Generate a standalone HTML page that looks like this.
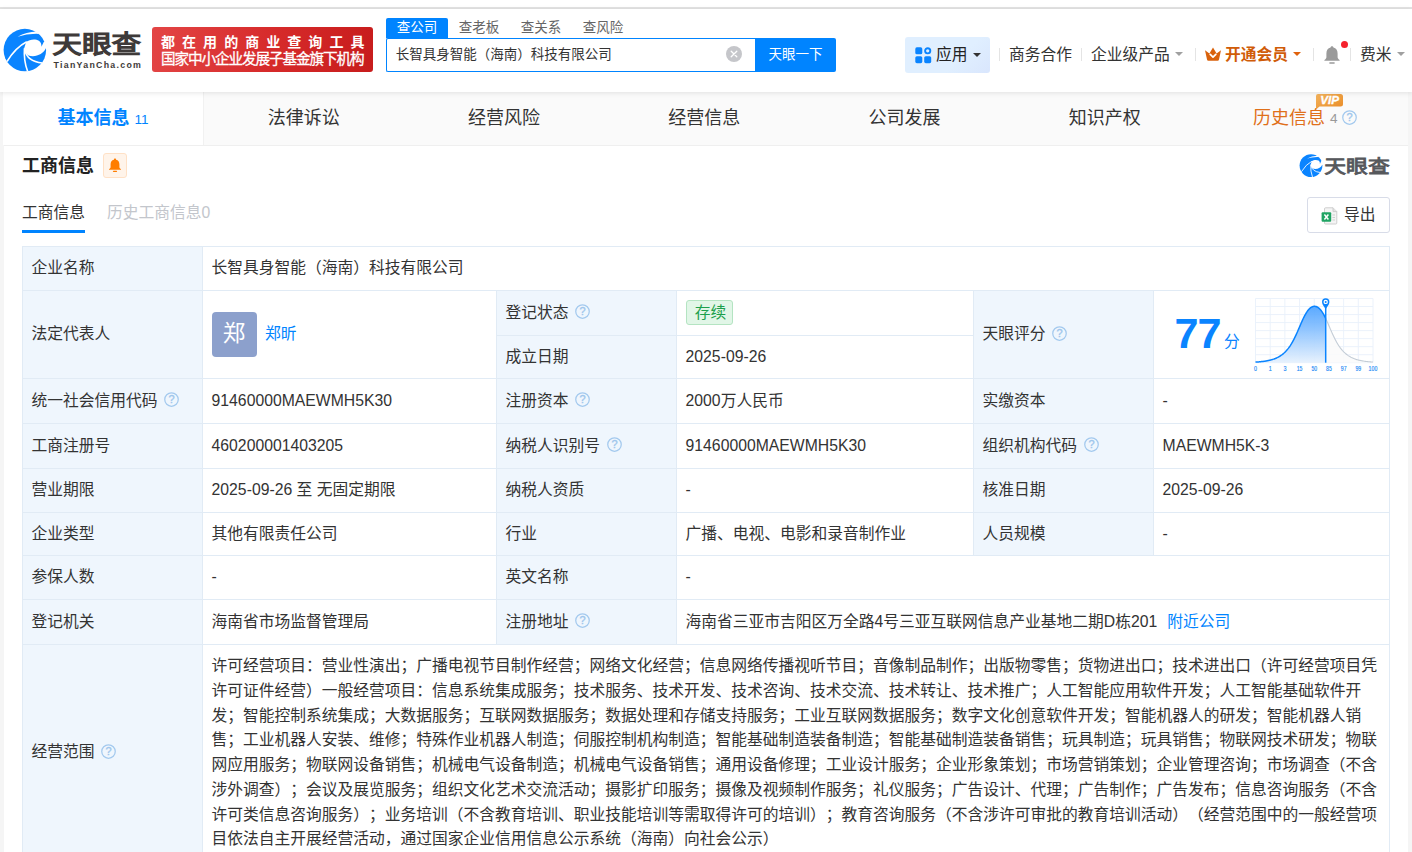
<!DOCTYPE html>
<html lang="zh-CN">
<head>
<meta charset="utf-8">
<title>长智具身智能（海南）科技有限公司 - 天眼查</title>
<style>
*{box-sizing:border-box;}
html,body{margin:0;padding:0;}
body{
  width:1412px;height:852px;overflow:hidden;position:relative;background:#f5f5f5;
  font-family:"Liberation Sans","Noto Sans CJK SC",sans-serif;
  font-size:15.75px;color:#333;
  text-spacing-trim:space-all;
  -webkit-font-smoothing:antialiased;
}
.abs{position:absolute;}
/* ---------- top / header ---------- */
#topwhite{left:0;top:0;width:1412px;height:92px;background:#fff;}
#topline{left:0;top:7px;width:1412px;height:2px;background:#e3e3e3;}
#header{left:0;top:9px;width:1412px;height:83px;background:#fff;box-shadow:0 1px 5px rgba(0,0,0,.10);z-index:5;}
#logo{left:3px;top:28px;width:140px;height:44px;z-index:6;}
#banner{left:152px;top:27px;width:221px;height:45px;border-radius:3px;z-index:6;
  background:linear-gradient(100deg,#e34545 0%,#d62a2a 55%,#c71c1c 100%);color:#fff;white-space:nowrap;}
#banner .l1{position:absolute;left:9px;top:3.5px;font-size:14px;font-weight:bold;letter-spacing:7.05px;line-height:22px;}
#banner .l2{position:absolute;left:9px;top:21px;font-size:14.6px;letter-spacing:-1.1px;line-height:22px;-webkit-text-stroke:.3px #fff;}
.stab{top:18px;width:62px;height:20px;line-height:19px;font-size:13.5px;text-align:center;color:#666;z-index:6;letter-spacing:0;}
.stab.on{background:#0084ff;color:#fff;border-radius:2px 2px 0 0;}
#sinput{left:386px;top:38px;width:371px;height:34px;border:1px solid #0084ff;border-right:none;border-radius:2px 0 0 2px;background:#fff;z-index:6;
  font-size:13.5px;line-height:32px;padding-left:8.8px;color:#333;white-space:nowrap;}
#sclear{left:726px;top:46px;width:16px;height:16px;border-radius:50%;background:#c5c6ca;z-index:7;}
#sbtn{left:755px;top:38px;width:81px;height:34px;background:#0084ff;color:#fff;font-size:13.5px;line-height:33px;text-align:center;border-radius:0 2px 2px 0;z-index:6;}
#app{left:905px;top:37px;width:85px;height:36px;border-radius:3px;background:linear-gradient(135deg,#e0efff 0%,#e0efff 62%,#d9e6fd 100%);z-index:6;}
.hsep{top:48px;width:1px;height:13px;background:#e4e4e4;z-index:6;}
.htxt{top:43px;height:24px;line-height:24px;font-size:15.75px;color:#333;white-space:nowrap;z-index:6;}
.caret{width:0;height:0;border-left:4px solid transparent;border-right:4px solid transparent;border-top:4.5px solid #999;z-index:6;}
/* ---------- nav ---------- */
#nav{left:4px;top:92px;width:1404px;height:54px;background:#fafafa;border-bottom:1px solid #efefef;z-index:1;}
.ntab{top:92px;height:53px;line-height:52px;text-align:center;font-size:18px;color:#333;white-space:nowrap;z-index:2;}
/* ---------- card ---------- */
#card{left:4px;top:146px;width:1404px;height:706px;background:#fff;}
#title{left:22px;top:152.5px;font-size:18px;font-weight:bold;line-height:26px;color:#222;white-space:nowrap;}
#bellbox{left:103px;top:153px;width:24px;height:25px;border:1px solid #ffe1c6;background:#fff4ea;border-radius:3px;}
.subtab{top:200px;line-height:26px;font-size:15.75px;white-space:nowrap;}
#uline{left:22px;top:230px;width:63px;height:3px;background:#0084ff;}
#export{left:1307px;top:197px;width:83px;height:36px;border:1px solid #d8dce8;border-radius:3px;background:#fff;}
#export span{position:absolute;left:36px;top:5px;line-height:24px;font-size:15.75px;color:#333;}
/* ---------- table ---------- */
#tbl{left:22px;top:246px;width:1368px;border-collapse:collapse;table-layout:fixed;}
#tbl td{border:1px solid #e1ebf5;padding:0 9px 0 8.6px;vertical-align:middle;font-size:15.75px;line-height:24.75px;color:#333;white-space:nowrap;overflow:hidden;}
#tbl td.k{background:#eff6fd;}
.q{display:inline-block;width:15px;height:15px;vertical-align:-1.5px;margin-left:6.8px;}
.lnk{color:#0084ff;}
.ava{display:inline-block;width:45px;height:45px;border-radius:4px;background:#8ca0cc;color:#fff;font-size:22.5px;line-height:44px;text-align:center;vertical-align:middle;}
.tag{display:inline-block;position:relative;top:-1px;height:25px;line-height:23px;padding:0 6px 0 8.2px;border:1px solid #b4e4c2;background:#e1f6e7;color:#1c9f4b;border-radius:3px;font-size:15.75px;vertical-align:middle;}
</style>
</head>
<body>
<div class="abs" id="topwhite"></div>
<div class="abs" id="header"></div>
<div class="abs" id="topline"></div>


<!-- logo -->
<svg class="abs" id="logo" viewBox="0 0 140 44" width="140" height="44">
  <g transform="translate(0.6,0.8) scale(0.425)">
    <circle cx="50" cy="50" r="50" fill="#0a84ff"/>
    <path d="M33 18.5 Q53 7.5 78.5 6.5 L83 12 Q56 11 33 18.5 Z" fill="#fff"/>
    <path d="M53 31 C61 24.5 75 23 83 28 C88 31.5 89.5 37 89 42.5 L94.5 31 L103 28 L103 47 L99.5 46 C93 60 75 68.5 57 62.5 L50 53 L48 47 Z" fill="#fff"/>
    <path d="M54.5 30.5 Q28 44 8 77" fill="none" stroke="#fff" stroke-width="3.8"/>
    <path d="M49 46 Q47 75 56.5 100" fill="none" stroke="#fff" stroke-width="3.8"/>
    <path d="M50 50 Q55 76 91 80.5" fill="none" stroke="#fff" stroke-width="3.8"/>
  </g>
  <text x="49.3" y="25.3" font-family="'Liberation Sans','Noto Sans CJK SC',sans-serif" font-weight="400" font-size="24.6" fill="#3e3a39" stroke="#3e3a39" stroke-width="1.25" stroke-linejoin="miter" textLength="89" lengthAdjust="spacingAndGlyphs">天眼查</text>
  <text x="50.6" y="39.8" font-family="'Liberation Sans',sans-serif" font-weight="bold" font-size="8.8" fill="#3e3a39" textLength="87.3" lengthAdjust="spacing">TianYanCha.com</text>
</svg>
<div class="abs" id="banner"><div class="l1">都在用的商业查询工具</div><div class="l2">国家中小企业发展子基金旗下机构</div></div>

<!-- search -->
<div class="abs stab on" style="left:386px;">查公司</div>
<div class="abs stab" style="left:448px;">查老板</div>
<div class="abs stab" style="left:510px;">查关系</div>
<div class="abs stab" style="left:572px;">查风险</div>
<div class="abs" id="sinput">长智具身智能（海南）科技有限公司</div>
<div class="abs" id="sclear"><svg viewBox="0 0 16 16" width="16" height="16" style="display:block"><path d="M5.2 5.2 L10.8 10.8 M10.8 5.2 L5.2 10.8" stroke="#fff" stroke-width="1.3" stroke-linecap="round" fill="none"/></svg></div>
<div class="abs" id="sbtn">天眼一下</div>

<!-- right menu -->
<div class="abs" id="app">
  <svg class="abs" style="left:10px;top:10px" width="17" height="17" viewBox="0 0 17 17">
    <rect x="0.3" y="0.3" width="7" height="7" rx="1.6" fill="#0a84ff"/>
    <rect x="0.3" y="9.2" width="7" height="7" rx="1.6" fill="#0a84ff"/>
    <rect x="9.2" y="9.2" width="7" height="7" rx="1.6" fill="#0a84ff"/>
    <circle cx="12.7" cy="3.8" r="2.6" fill="none" stroke="#0a84ff" stroke-width="1.9"/>
  </svg>
  <span class="abs" style="left:31px;top:6px;line-height:24px;font-size:15.75px;color:#222;white-space:nowrap;">应用</span>
  <span class="abs caret" style="left:68px;top:16px;border-top-color:#333;"></span>
</div>
<div class="abs hsep" style="left:999px;"></div>
<div class="abs htxt" style="left:1009px;">商务合作</div>
<div class="abs hsep" style="left:1081px;"></div>
<div class="abs htxt" style="left:1091px;">企业级产品</div>
<div class="abs caret" style="left:1175px;top:52px;border-top-color:#a0a0a0;"></div>
<div class="abs hsep" style="left:1195px;"></div>
<svg class="abs" style="left:1204px;top:46px;z-index:6" width="18" height="16" viewBox="0 0 18 16">
  <path d="M1 4.2 L5.4 7.6 L9 1.4 L12.6 7.6 L17 4.2 L15 13.6 Q14.8 14.8 13.6 14.8 L4.4 14.8 Q3.2 14.8 3 13.6 Z" fill="#d9620c"/>
  <path d="M6.2 8.4 L9 11.2 L11.8 8.4" fill="none" stroke="#fff" stroke-width="1.7" stroke-linecap="round" stroke-linejoin="round"/>
</svg>
<div class="abs htxt" style="left:1225px;color:#d05c08;font-weight:bold;">开通会员</div>
<div class="abs caret" style="left:1293px;top:52px;border-top-color:#e0620d;"></div>
<div class="abs hsep" style="left:1313px;"></div>
<svg class="abs" style="left:1323px;top:45px;z-index:6" width="18" height="20" viewBox="0 0 18 20">
  <path d="M9 1.2 C9.9 1.2 10.4 1.8 10.4 2.6 C13.2 3.3 14.6 5.6 14.6 8.4 L14.6 12.2 C14.6 13.4 15.6 14.2 16.6 15 L16.6 15.8 L1.4 15.8 L1.4 15 C2.4 14.2 3.4 13.4 3.4 12.2 L3.4 8.4 C3.4 5.6 4.8 3.3 7.6 2.6 C7.6 1.8 8.1 1.2 9 1.2 Z" fill="#9a9a9a"/>
  <rect x="6.2" y="17.3" width="5.6" height="1.5" rx=".7" fill="#9a9a9a"/>
</svg>
<div class="abs" style="left:1341px;top:41px;width:7px;height:7px;border-radius:50%;background:#f5222d;z-index:7;"></div>
<div class="abs hsep" style="left:1350px;"></div>
<div class="abs htxt" style="left:1360px;">费米</div>
<div class="abs caret" style="left:1397px;top:52px;border-top-color:#a0a0a0;"></div>


<div class="abs" id="nav"></div>
<div class="abs ntab" style="left:3.40px;width:200.25px;background:#fff;border-right:1px solid #f1f1f1;color:#0084ff;font-weight:bold;">基本信息<span style="font-weight:normal;font-size:13.5px;margin-left:5px;">11</span></div>
<div class="abs ntab" style="left:203.65px;width:200.25px;">法律诉讼</div>
<div class="abs ntab" style="left:403.90px;width:200.25px;">经营风险</div>
<div class="abs ntab" style="left:604.15px;width:200.25px;">经营信息</div>
<div class="abs ntab" style="left:804.40px;width:200.25px;">公司发展</div>
<div class="abs ntab" style="left:1004.65px;width:200.25px;">知识产权</div>
<div class="abs ntab" style="left:1204.90px;width:200.25px;color:#e0701a;text-align:left;padding-left:48.2px;">历史信息<span style="font-size:13.5px;color:#999;margin-left:5px;position:relative;top:-1.5px;">4</span></div>
<svg class="abs q" style="left:1342px;top:110px;width:15px;height:15px;margin:0;z-index:3" viewBox="0 0 15 15"><circle cx="7.5" cy="7.5" r="6.75" fill="none" stroke="#a3c9ee" stroke-width="1.25"/><text x="7.5" y="11.3" font-size="11" text-anchor="middle" fill="#9fc6ec" stroke="#9fc6ec" stroke-width=".35" font-family="'Liberation Sans',sans-serif">?</text></svg>
<svg class="abs" style="left:1315px;top:94px;z-index:3" width="29" height="16" viewBox="0 0 29 16">
  <defs><linearGradient id="vg" x1="0" y1="0" x2="1" y2="1"><stop offset="0" stop-color="#f3b35c"/><stop offset="1" stop-color="#e98a25"/></linearGradient></defs>
  <path d="M3 0 H25.5 Q28 0 28 2.5 V10 Q28 12.5 25.5 12.5 H4.5 L1 15.5 V2 Q1 0 3 0 Z" fill="url(#vg)"/>
  <text x="14.6" y="10.4" font-size="11.6" font-weight="bold" font-style="italic" text-anchor="middle" fill="#fff" stroke="#fff" stroke-width=".35" font-family="'Liberation Sans',sans-serif">VIP</text>
</svg>


<div class="abs" id="card"></div>
<div class="abs" id="title">工商信息</div>
<div class="abs" id="bellbox"><svg class="abs" style="left:4px;top:4px" width="14" height="15" viewBox="0 0 14 15"><path d="M7 0.6 C7.7 0.6 8.1 1.1 8.1 1.7 C10.3 2.2 11.4 4 11.4 6.2 L11.4 9 C11.4 10 12.2 10.6 13 11.2 L13 11.8 L1 11.8 L1 11.2 C1.8 10.6 2.6 10 2.6 9 L2.6 6.2 C2.6 4 3.7 2.2 5.9 1.7 C5.9 1.1 6.3 0.6 7 0.6 Z" fill="#ff7d00"/><rect x="4.9" y="12.7" width="4.2" height="1.2" rx=".6" fill="#ff7d00"/></svg></div>
<div class="abs subtab" style="left:22px;color:#333;">工商信息</div>
<div class="abs subtab" style="left:107px;color:#c3c6cc;">历史工商信息0</div>
<div class="abs" id="uline"></div>

<!-- watermark logo -->
<svg class="abs" style="left:1298px;top:152px" width="94" height="28" viewBox="0 0 94 28">
  <g transform="translate(1.6,2.2) scale(0.228)">
    <circle cx="50" cy="50" r="50" fill="#0a84ff"/>
    <path d="M33 18.5 Q53 7.5 78.5 6.5 L83 12 Q56 11 33 18.5 Z" fill="#fff"/>
    <path d="M53 31 C61 24.5 75 23 83 28 C88 31.5 89.5 37 89 42.5 L94.5 31 L103 28 L103 47 L99.5 46 C93 60 75 68.5 57 62.5 L50 53 L48 47 Z" fill="#fff"/>
    <path d="M54.5 30.5 Q28 44 8 77" fill="none" stroke="#fff" stroke-width="3.8"/>
    <path d="M49 46 Q47 75 56.5 100" fill="none" stroke="#fff" stroke-width="3.8"/>
    <path d="M50 50 Q55 76 91 80.5" fill="none" stroke="#fff" stroke-width="3.8"/>
  </g>
  <text x="26.3" y="20.9" font-family="'Liberation Sans','Noto Sans CJK SC',sans-serif" font-weight="400" font-size="18.2" fill="#56585c" stroke="#56585c" stroke-width=".85" textLength="65.5" lengthAdjust="spacingAndGlyphs">天眼查</text>
</svg>

<div class="abs" id="export">
  <svg class="abs" style="left:13px;top:9px" width="17" height="18" viewBox="0 0 17 18">
    <path d="M4.5 0.8 H12 L15.8 4.6 V16 Q15.8 17 14.8 17 H4.5 Q3.5 17 3.5 16 V1.8 Q3.5 0.8 4.5 0.8 Z" fill="#f4f4f4" stroke="#c9c9c9" stroke-width=".9"/>
    <path d="M12 0.8 V4.6 H15.8" fill="#e2e2e2" stroke="#c9c9c9" stroke-width=".9"/>
    <path d="M11.5 8 H14 M11.5 10.5 H14 M11.5 13 H14" stroke="#cfcfcf" stroke-width="1"/>
    <rect x="0.6" y="5.2" width="9.6" height="9.6" rx="1" fill="#1fa463"/>
    <path d="M3.4 7.6 L7.4 12.4 M7.4 7.6 L3.4 12.4" stroke="#fff" stroke-width="1.5" fill="none"/>
  </svg>
  <span>导出</span>
</div>

<table class="abs" id="tbl" cellspacing="0" cellpadding="0">
<colgroup><col style="width:180px"><col style="width:294px"><col style="width:180px"><col style="width:297px"><col style="width:180px"><col style="width:236px"></colgroup>
<tr style="height:44px"><td class="k">企业名称</td><td colspan="5">长智具身智能（海南）科技有限公司</td></tr>
<tr style="height:45px"><td class="k" rowspan="2">法定代表人</td><td rowspan="2" style="position:relative;"><span class="ava">郑</span><span class="lnk" style="position:absolute;left:62px;top:31px;">郑昕</span></td><td class="k">登记状态<svg class="q" viewBox="0 0 15 15"><circle cx="7.5" cy="7.5" r="6.75" fill="none" stroke="#a3c9ee" stroke-width="1.25"/><text x="7.5" y="11.3" font-size="11" text-anchor="middle" fill="#9fc6ec" stroke="#9fc6ec" stroke-width=".35" font-family="'Liberation Sans',sans-serif">?</text></svg></td><td><span class="tag">存续</span></td><td class="k" rowspan="2">天眼评分<svg class="q" viewBox="0 0 15 15"><circle cx="7.5" cy="7.5" r="6.75" fill="none" stroke="#a3c9ee" stroke-width="1.25"/><text x="7.5" y="11.3" font-size="11" text-anchor="middle" fill="#9fc6ec" stroke="#9fc6ec" stroke-width=".35" font-family="'Liberation Sans',sans-serif">?</text></svg></td><td rowspan="2" style="position:relative;padding:0;"><span class="abs" style="left:20.5px;top:17.5px;font-size:43.2px;line-height:48px;font-weight:bold;color:#0a84ff;letter-spacing:-1.1px;">77</span><span class="abs" style="left:70px;top:39px;font-size:15.75px;line-height:24px;color:#0a84ff;">分</span>
<svg class="abs" style="left:96px;top:1px;" width="130" height="85" viewBox="0 0 1300 850">
  <defs><linearGradient id="cg" x1="0" y1="0" x2="0" y2="1"><stop offset="0" stop-color="#4ea3ff"/><stop offset=".35" stop-color="#7fbcff"/><stop offset="1" stop-color="#e6f1fd"/></linearGradient></defs>
  <path d="M55.0 65 V707 M201.9 65 V707 M348.8 65 V707 M495.6 65 V707 M642.5 65 V707 M789.4 65 V707 M936.2 65 V707 M1083.1 65 V707 M1230.0 65 V707 M55 65.0 H1230 M55 145.2 H1230 M55 225.5 H1230 M55 305.8 H1230 M55 386.0 H1230 M55 466.2 H1230 M55 546.5 H1230 M55 626.8 H1230 M55 707.0 H1230 " fill="none" stroke="#e9f1fb" stroke-width="9"/>
  <path d="M757 264.6 L763 277.4 L769 290.6 L775 304.1 L781 317.8 L787 331.7 L793 345.8 L799 359.8 L805 373.8 L811 387.6 L817 401.3 L823 414.8 L829 428.0 L835 440.9 L841 453.4 L847 465.5 L853 477.2 L859 488.5 L865 499.4 L871 509.9 L877 519.9 L883 529.5 L889 538.7 L895 547.4 L901 555.8 L907 563.7 L913 571.3 L919 578.5 L925 585.4 L931 591.9 L937 598.1 L943 603.9 L949 609.5 L955 614.8 L961 619.8 L967 624.6 L973 629.1 L979 633.4 L985 637.5 L991 641.3 L997 645.0 L1003 648.4 L1009 651.7 L1015 654.8 L1021 657.7 L1027 660.5 L1033 663.1 L1039 665.6 L1045 667.9 L1051 670.1 L1057 672.2 L1063 674.2 L1069 676.1 L1075 677.8 L1081 679.5 L1087 681.1 L1093 682.5 L1099 683.9 L1105 685.3 L1111 686.5 L1117 687.7 L1123 688.8 L1129 689.9 L1135 690.8 L1141 691.8 L1147 692.7 L1153 693.5 L1159 694.3 L1165 695.0 L1171 695.7 L1177 696.4 L1183 697.0 L1189 697.6 L1195 698.1 L1201 698.6 L1207 699.1 L1213 699.6 L1219 700.0 L1225 700.4 L1230 700.7 L1230 707 L757 707 Z" fill="#fafafa" opacity=".85"/>
  <path d="M55 701.0 L61 700.7 L67 700.3 L73 699.9 L79 699.4 L85 698.9 L91 698.5 L97 697.9 L103 697.4 L109 696.8 L115 696.1 L121 695.5 L127 694.8 L133 694.0 L139 693.2 L145 692.4 L151 691.5 L157 690.5 L163 689.5 L169 688.4 L175 687.3 L181 686.1 L187 684.8 L193 683.5 L199 682.1 L205 680.5 L211 678.9 L217 677.2 L223 675.4 L229 673.5 L235 671.5 L241 669.4 L247 667.1 L253 664.8 L259 662.2 L265 659.6 L271 656.7 L277 653.8 L283 650.6 L289 647.3 L295 643.8 L301 640.1 L307 636.1 L313 632.0 L319 627.7 L325 623.1 L331 618.2 L337 613.1 L343 607.7 L349 602.0 L355 596.0 L361 589.7 L367 583.1 L373 576.1 L379 568.8 L385 561.1 L391 553.0 L397 544.5 L403 535.7 L409 526.3 L415 516.6 L421 506.4 L427 495.8 L433 484.8 L439 473.4 L445 461.5 L451 449.2 L457 436.6 L463 423.6 L469 410.3 L475 396.8 L481 383.0 L487 369.1 L493 355.1 L499 341.1 L505 327.1 L511 313.2 L517 299.6 L523 286.2 L529 273.1 L535 260.4 L541 248.3 L547 236.6 L553 225.6 L559 215.1 L565 205.4 L571 196.3 L577 187.9 L583 180.2 L589 173.3 L595 167.1 L601 161.6 L607 156.8 L613 152.8 L619 149.4 L625 146.8 L631 144.9 L637 143.6 L643 143.0 L649 143.2 L655 143.9 L661 145.4 L667 147.6 L673 150.5 L679 154.0 L685 158.3 L691 163.3 L697 169.0 L703 175.5 L709 182.7 L715 190.6 L721 199.2 L727 208.5 L733 218.5 L739 229.2 L745 240.4 L751 252.3 L757 264.6 L757 707 L55 707 Z" fill="url(#cg)" opacity=".93"/>
  <path d="M757 264.6 L763 277.4 L769 290.6 L775 304.1 L781 317.8 L787 331.7 L793 345.8 L799 359.8 L805 373.8 L811 387.6 L817 401.3 L823 414.8 L829 428.0 L835 440.9 L841 453.4 L847 465.5 L853 477.2 L859 488.5 L865 499.4 L871 509.9 L877 519.9 L883 529.5 L889 538.7 L895 547.4 L901 555.8 L907 563.7 L913 571.3 L919 578.5 L925 585.4 L931 591.9 L937 598.1 L943 603.9 L949 609.5 L955 614.8 L961 619.8 L967 624.6 L973 629.1 L979 633.4 L985 637.5 L991 641.3 L997 645.0 L1003 648.4 L1009 651.7 L1015 654.8 L1021 657.7 L1027 660.5 L1033 663.1 L1039 665.6 L1045 667.9 L1051 670.1 L1057 672.2 L1063 674.2 L1069 676.1 L1075 677.8 L1081 679.5 L1087 681.1 L1093 682.5 L1099 683.9 L1105 685.3 L1111 686.5 L1117 687.7 L1123 688.8 L1129 689.9 L1135 690.8 L1141 691.8 L1147 692.7 L1153 693.5 L1159 694.3 L1165 695.0 L1171 695.7 L1177 696.4 L1183 697.0 L1189 697.6 L1195 698.1 L1201 698.6 L1207 699.1 L1213 699.6 L1219 700.0 L1225 700.4 L1230 700.7" fill="none" stroke="#c3ccd6" stroke-width="11"/>
  <path d="M55 701.0 L61 700.7 L67 700.3 L73 699.9 L79 699.4 L85 698.9 L91 698.5 L97 697.9 L103 697.4 L109 696.8 L115 696.1 L121 695.5 L127 694.8 L133 694.0 L139 693.2 L145 692.4 L151 691.5 L157 690.5 L163 689.5 L169 688.4 L175 687.3 L181 686.1 L187 684.8 L193 683.5 L199 682.1 L205 680.5 L211 678.9 L217 677.2 L223 675.4 L229 673.5 L235 671.5 L241 669.4 L247 667.1 L253 664.8 L259 662.2 L265 659.6 L271 656.7 L277 653.8 L283 650.6 L289 647.3 L295 643.8 L301 640.1 L307 636.1 L313 632.0 L319 627.7 L325 623.1 L331 618.2 L337 613.1 L343 607.7 L349 602.0 L355 596.0 L361 589.7 L367 583.1 L373 576.1 L379 568.8 L385 561.1 L391 553.0 L397 544.5 L403 535.7 L409 526.3 L415 516.6 L421 506.4 L427 495.8 L433 484.8 L439 473.4 L445 461.5 L451 449.2 L457 436.6 L463 423.6 L469 410.3 L475 396.8 L481 383.0 L487 369.1 L493 355.1 L499 341.1 L505 327.1 L511 313.2 L517 299.6 L523 286.2 L529 273.1 L535 260.4 L541 248.3 L547 236.6 L553 225.6 L559 215.1 L565 205.4 L571 196.3 L577 187.9 L583 180.2 L589 173.3 L595 167.1 L601 161.6 L607 156.8 L613 152.8 L619 149.4 L625 146.8 L631 144.9 L637 143.6 L643 143.0 L649 143.2 L655 143.9 L661 145.4 L667 147.6 L673 150.5 L679 154.0 L685 158.3 L691 163.3 L697 169.0 L703 175.5 L709 182.7 L715 190.6 L721 199.2 L727 208.5 L733 218.5 L739 229.2 L745 240.4 L751 252.3 L757 264.6" fill="none" stroke="#0a84ff" stroke-width="15" stroke-linejoin="round"/>
  <path d="M757 150 V707" stroke="#0a84ff" stroke-width="15"/>
  <path d="M757 172 C745 150 720 128 720 100 A37 37 0 1 1 794 100 C794 128 769 150 757 172 Z" fill="#0a84ff"/>
  <circle cx="757" cy="99" r="22" fill="#fff"/>
  <circle cx="757" cy="99" r="10" fill="#0a84ff"/>
  <g font-family="'Liberation Sans',sans-serif" font-size="64" fill="#2189f6" stroke="#2189f6" stroke-width="1.5"><text x="40" y="791" textLength="30" lengthAdjust="spacingAndGlyphs">0</text><text x="187" y="791" textLength="30" lengthAdjust="spacingAndGlyphs">1</text><text x="334" y="791" textLength="30" lengthAdjust="spacingAndGlyphs">3</text><text x="467" y="791" textLength="57" lengthAdjust="spacingAndGlyphs">15</text><text x="614" y="791" textLength="57" lengthAdjust="spacingAndGlyphs">50</text><text x="761" y="791" textLength="57" lengthAdjust="spacingAndGlyphs">85</text><text x="908" y="791" textLength="57" lengthAdjust="spacingAndGlyphs">97</text><text x="1055" y="791" textLength="57" lengthAdjust="spacingAndGlyphs">99</text><text x="1186" y="791" textLength="87" lengthAdjust="spacingAndGlyphs">100</text></g>
</svg></td></tr>
<tr style="height:43px"><td class="k">成立日期</td><td>2025-09-26</td></tr>
<tr style="height:45px"><td class="k">统一社会信用代码<svg class="q" viewBox="0 0 15 15"><circle cx="7.5" cy="7.5" r="6.75" fill="none" stroke="#a3c9ee" stroke-width="1.25"/><text x="7.5" y="11.3" font-size="11" text-anchor="middle" fill="#9fc6ec" stroke="#9fc6ec" stroke-width=".35" font-family="'Liberation Sans',sans-serif">?</text></svg></td><td>91460000MAEWMH5K30</td><td class="k">注册资本<svg class="q" viewBox="0 0 15 15"><circle cx="7.5" cy="7.5" r="6.75" fill="none" stroke="#a3c9ee" stroke-width="1.25"/><text x="7.5" y="11.3" font-size="11" text-anchor="middle" fill="#9fc6ec" stroke="#9fc6ec" stroke-width=".35" font-family="'Liberation Sans',sans-serif">?</text></svg></td><td>2000万人民币</td><td class="k">实缴资本</td><td>-</td></tr>
<tr style="height:45px"><td class="k">工商注册号</td><td>460200001403205</td><td class="k">纳税人识别号<svg class="q" viewBox="0 0 15 15"><circle cx="7.5" cy="7.5" r="6.75" fill="none" stroke="#a3c9ee" stroke-width="1.25"/><text x="7.5" y="11.3" font-size="11" text-anchor="middle" fill="#9fc6ec" stroke="#9fc6ec" stroke-width=".35" font-family="'Liberation Sans',sans-serif">?</text></svg></td><td>91460000MAEWMH5K30</td><td class="k">组织机构代码<svg class="q" viewBox="0 0 15 15"><circle cx="7.5" cy="7.5" r="6.75" fill="none" stroke="#a3c9ee" stroke-width="1.25"/><text x="7.5" y="11.3" font-size="11" text-anchor="middle" fill="#9fc6ec" stroke="#9fc6ec" stroke-width=".35" font-family="'Liberation Sans',sans-serif">?</text></svg></td><td>MAEWMH5K-3</td></tr>
<tr style="height:44px"><td class="k">营业期限</td><td>2025-09-26 至 无固定期限</td><td class="k">纳税人资质</td><td>-</td><td class="k">核准日期</td><td>2025-09-26</td></tr>
<tr style="height:43px"><td class="k">企业类型</td><td>其他有限责任公司</td><td class="k">行业</td><td>广播、电视、电影和录音制作业</td><td class="k">人员规模</td><td>-</td></tr>
<tr style="height:44px"><td class="k">参保人数</td><td>-</td><td class="k">英文名称</td><td colspan="3">-</td></tr>
<tr style="height:45px"><td class="k">登记机关</td><td>海南省市场监督管理局</td><td class="k">注册地址<svg class="q" viewBox="0 0 15 15"><circle cx="7.5" cy="7.5" r="6.75" fill="none" stroke="#a3c9ee" stroke-width="1.25"/><text x="7.5" y="11.3" font-size="11" text-anchor="middle" fill="#9fc6ec" stroke="#9fc6ec" stroke-width=".35" font-family="'Liberation Sans',sans-serif">?</text></svg></td><td colspan="3">海南省三亚市吉阳区万全路4号三亚互联网信息产业基地二期D栋201<span class="lnk" style="margin-left:10px;">附近公司</span></td></tr>
<tr style="height:216px"><td class="k">经营范围<svg class="q" viewBox="0 0 15 15"><circle cx="7.5" cy="7.5" r="6.75" fill="none" stroke="#a3c9ee" stroke-width="1.25"/><text x="7.5" y="11.3" font-size="11" text-anchor="middle" fill="#9fc6ec" stroke="#9fc6ec" stroke-width=".35" font-family="'Liberation Sans',sans-serif">?</text></svg></td><td colspan="5" style="vertical-align:top;padding-top:9px;">许可经营项目：营业性演出；广播电视节目制作经营；网络文化经营；信息网络传播视听节目；音像制品制作；出版物零售；货物进出口；技术进出口（许可经营项目凭<br>许可证件经营）一般经营项目：信息系统集成服务；技术服务、技术开发、技术咨询、技术交流、技术转让、技术推广；人工智能应用软件开发；人工智能基础软件开<br>发；智能控制系统集成；大数据服务；互联网数据服务；数据处理和存储支持服务；工业互联网数据服务；数字文化创意软件开发；智能机器人的研发；智能机器人销<br>售；工业机器人安装、维修；特殊作业机器人制造；伺服控制机构制造；智能基础制造装备制造；智能基础制造装备销售；玩具制造；玩具销售；物联网技术研发；物联<br>网应用服务；物联网设备销售；机械电气设备制造；机械电气设备销售；通用设备修理；工业设计服务；企业形象策划；市场营销策划；企业管理咨询；市场调查（不含<br>涉外调查）；会议及展览服务；组织文化艺术交流活动；摄影扩印服务；摄像及视频制作服务；礼仪服务；广告设计、代理；广告制作；广告发布；信息咨询服务（不含<br>许可类信息咨询服务）；业务培训（不含教育培训、职业技能培训等需取得许可的培训）；教育咨询服务（不含涉许可审批的教育培训活动）（经营范围中的一般经营项<br>目依法自主开展经营活动，通过国家企业信用信息公示系统（海南）向社会公示）</td></tr>
</table>


</body>
</html>
